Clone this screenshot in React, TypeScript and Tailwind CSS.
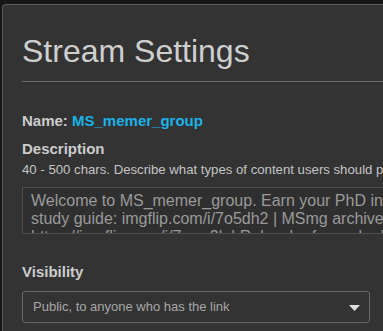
import React from 'react';

const description =
  'Welcome to MS_memer_group. Earn your PhD in memes, one post at a time.\nstudy guide: imgflip.com/i/7o5dh2 | MSmg archives: imgflip.com/m/MSmg_archives\nhttps://imgflip.com/i/7wnx3k | Rules: be funny, be kind, no reposts.';

const App: React.FC = () => {
  return (
    <div className="h-[331px] overflow-hidden bg-[#161616] pt-1 pl-0.5 font-['Liberation_Sans',Arial,sans-serif]">
      {/* Settings panel */}
      <div className="w-[660px] min-h-[400px] bg-[#333333] border-l border-t border-[#5a5a5a] rounded-tl-sm pl-[19px] pt-[28px]">
        <h1 className="text-[32px] leading-[36px] text-[#cfcfcf]">Stream Settings</h1>
        <div className="mt-3 h-px bg-[#6a6a6a]" />

        <div className="mt-[30px] text-[15px] leading-[18px] font-bold text-[#cccccc]">
          Name: <span className="text-[#1ab2e8]">MS_memer_group</span>
        </div>

        <div className="mt-[10px] text-[15px] leading-[18px] font-bold text-[#cccccc]">Description</div>
        <div className="mt-1 text-[13.2px] leading-4 text-[#c4c4c4] whitespace-nowrap">
          40 - 500 chars. Describe what types of content users should post in this stream, and link any rules or guides.
        </div>

        <textarea
          readOnly
          value={description}
          className="mt-[9px] block w-[600px] h-[47px] resize-none overflow-hidden whitespace-pre bg-[#2f2f2f] border border-[#4e4e4e] px-2 py-1 text-[16px] leading-[18px] text-[#9a9a9a] outline-none"
        />

        <div className="mt-[29px] text-[15px] leading-[18px] font-bold text-[#cccccc]">Visibility</div>

        <div className="mt-[10px] w-[348px] h-[32px] flex items-center justify-between border border-[#666666] rounded-[3px] bg-[#333333] pl-[10px] pr-[9px]">
          <span className="text-[13px] text-[#a8a8a8]">Public, to anyone who has the link</span>
          <svg width="11" height="6" viewBox="0 0 11 6" className="mt-0.5">
            <path d="M0 0 H11 L5.5 6 Z" fill="#dddddd" />
          </svg>
        </div>
      </div>
    </div>
  );
};

export default App;
